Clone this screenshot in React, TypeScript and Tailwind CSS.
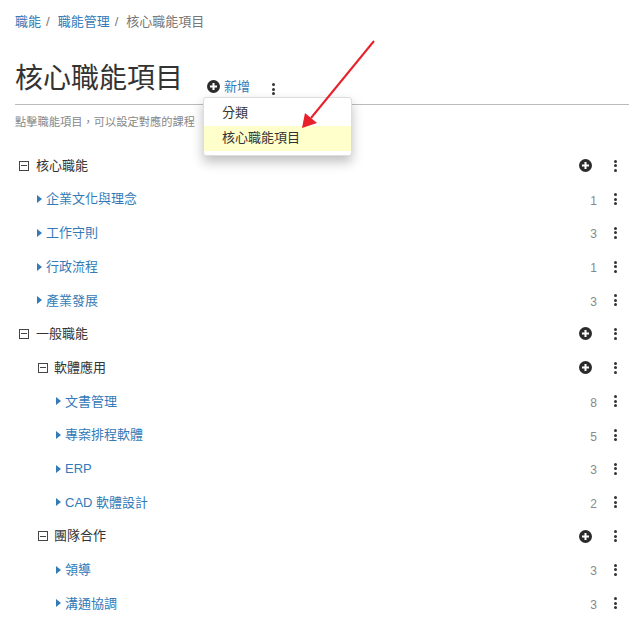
type Row = { label: string; level: number; group?: boolean; count?: number }

const rows: Row[] = [
    { label: '核心職能', level: 0, group: true },
    { label: '企業文化與理念', level: 0, count: 1 },
    { label: '工作守則', level: 0, count: 3 },
    { label: '行政流程', level: 0, count: 1 },
    { label: '產業發展', level: 0, count: 3 },
    { label: '一般職能', level: 0, group: true },
    { label: '軟體應用', level: 1, group: true },
    { label: '文書管理', level: 1, count: 8 },
    { label: '專案排程軟體', level: 1, count: 5 },
    { label: 'ERP', level: 1, count: 3 },
    { label: 'CAD 軟體設計', level: 1, count: 2 },
    { label: '團隊合作', level: 1, group: true },
    { label: '領導', level: 1, count: 3 },
    { label: '溝通協調', level: 1, count: 3 },
]

function PlusCircle({ size = 13 }: { size?: number }) {
    return (
        <svg width={size} height={size} viewBox="0 0 14 14" className="shrink-0">
            <circle cx="7" cy="7" r="7" fill="#2b2b2b" />
            <path d="M7 3.2v7.6M3.2 7h7.6" stroke="#fff" strokeWidth="2.2" />
        </svg>
    )
}

function Dots() {
    return (
        <span className="flex w-[4px] flex-col gap-[1.5px]">
            <span className="h-[3px] w-[3px] rounded-full bg-[#333]"></span>
            <span className="h-[3px] w-[3px] rounded-full bg-[#333]"></span>
            <span className="h-[3px] w-[3px] rounded-full bg-[#333]"></span>
        </span>
    )
}

function Minus() {
    return (
        <span className="flex h-[10px] w-[10px] shrink-0 items-center justify-center border border-[#444]">
            <span className="h-px w-[6px] bg-[#444]"></span>
        </span>
    )
}

function TreeRow({ row }: { row: Row }) {
    const indent = row.level === 1 ? (row.group ? 'pl-[38px]' : 'pl-[56px]') : row.group ? 'pl-[19px]' : 'pl-[37px]'
    return (
        <div className={`flex h-[33.7px] items-center justify-between pr-[26px] ${indent}`}>
            {row.group ? (
                <div className="flex items-center gap-[6px] text-[13px] text-[#333]">
                    <Minus />
                    <span className={row.level === 0 ? 'ml-[1px]' : ''}>{row.label}</span>
                </div>
            ) : (
                <div className="flex items-center gap-[4px] text-[13px] text-[#337ab7]">
                    <span className="h-0 w-0 border-y-[4px] border-l-[5px] border-y-transparent border-l-[#337ab7]"></span>
                    <span>{row.label}</span>
                </div>
            )}
            <div className="flex items-center">
                {row.group ? (
                    <span className="mr-[2.5px]">
                        <PlusCircle />
                    </span>
                ) : (
                    <span className="mt-[3px] -mr-[3px] text-[12px] text-[#888]">{row.count}</span>
                )}
                <span className="ml-[20px] flex justify-center">
                    <Dots />
                </span>
            </div>
        </div>
    )
}

export default function App() {
    return (
        <div className="relative h-[627px] w-[644px] overflow-hidden bg-white font-['Liberation_Sans','Noto_Sans_CJK_TC',sans-serif]">
            {/* Breadcrumb */}
            <div className="flex h-[42px] items-center pt-[2px] pl-[15px] text-[13px] text-[#777]">
                <span className="text-[#337ab7]">職能</span>
                <span className="mx-[5px]">/</span>
                <span className="ml-[3px] text-[#337ab7]">職能管理</span>
                <span className="mx-[5px]">/</span>
                <span className="ml-[3px]">核心職能項目</span>
            </div>

            {/* Heading */}
            <div className="mx-[15px] flex h-[63px] items-end border-b border-[#bbb] pb-[5px]">
                <h1 className="text-[28px] leading-[40px] font-normal text-[#333]">核心職能項目</h1>
                <div className="mb-[3px] ml-[24px] flex items-center gap-[4px] text-[13px] text-[#337ab7]">
                    <PlusCircle />
                    <span>新增</span>
                </div>
                <span className="mb-[4px] ml-[22px]">
                    <Dots />
                </span>
            </div>
            <p className="pt-[9px] pl-[15px] text-[11.25px] leading-[16px] text-[#888]">{'點擊職能項目\uFF0C可以設定對應的課程'}</p>

            {/* Tree */}
            <div className="mt-[18.7px]">
                {rows.map((row) => (
                    <TreeRow key={row.label} row={row} />
                ))}
            </div>

            {/* Dropdown */}
            <div className="absolute top-[97px] left-[203px] w-[149px] rounded-[3px] border border-[#ddd] bg-white pt-[3px] pb-[4px] text-[13px] text-[#333] shadow-[0_6px_12px_rgba(0,0,0,0.25)]">
                <div className="h-[25px] pl-[18px] leading-[24px]">分類</div>
                <div className="h-[25px] bg-[#ffffcc] pl-[18px] leading-[23px]">核心職能項目</div>
            </div>

            {/* Annotation arrow */}
            <svg className="absolute top-[38px] left-[298px]" width="80" height="94" viewBox="0 0 80 94">
                <path d="M76 3 L13 80" stroke="#e8202a" strokeWidth="2" fill="none" />
                <path d="M4 90 L7 75 L19 85 Z" fill="#e8202a" />
            </svg>
        </div>
    )
}
